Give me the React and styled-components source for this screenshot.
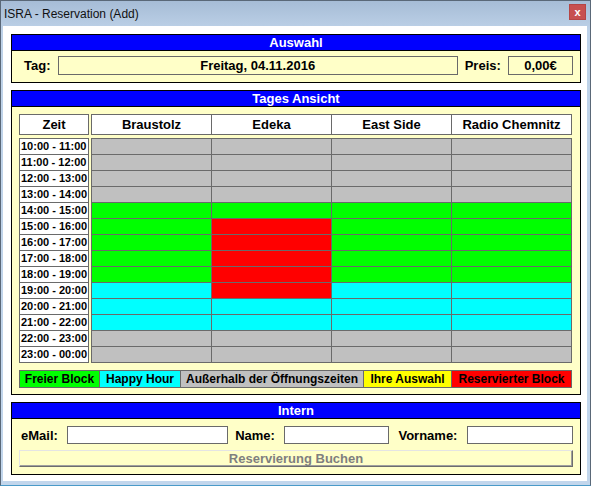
import React from 'react';
import styled, { createGlobalStyle } from 'styled-components';

const GlobalStyle = createGlobalStyle`
  html, body { margin: 0; padding: 0; background: #ffffff; }
  * { box-sizing: border-box; }
`;

const YELLOW = '#ffffc8';
const LINE = '#6a6a6a';

const COLORS = {
  g: '#c0c0c0',
  f: '#00ff00',
  h: '#00ffff',
  r: '#ff0000',
  y: '#ffff00',
};

const Window = styled.div`
  width: 591px;
  height: 486px;
  border: 1px solid #5a6878;
  border-bottom-color: #4a9ac8;
  background: linear-gradient(#a6bcd6, #bed2e8 30px, #c2d6ec);
  display: flex;
  flex-direction: column;
  padding: 0 3px 4px 1px;
  font-family: "Liberation Sans", Arial, sans-serif;
`;

const TitleBar = styled.div`
  height: 25px;
  display: flex;
  align-items: center;
  justify-content: space-between;
  padding-left: 2px;
  padding-right: 1px;
  font-size: 12px;
  color: #111;
`;

const CloseButton = styled.div`
  width: 17px;
  height: 16px;
  margin-top: -4px;
  background: #c75050;
  color: #fff;
  font-weight: bold;
  font-size: 11px;
  line-height: 14px;
  text-align: center;
  border: 1px solid #b54545;
`;

const Client = styled.div`
  flex: 1;
  margin-left: 1px;
  background: #ffffff;
  padding: 8px 6px 0 8px;
  display: flex;
  flex-direction: column;
  gap: 7px;
`;

const Panel = styled.section`
  border: 1px solid #000;
  background: ${YELLOW};
`;

const PanelHeader = styled.div`
  background: #0000ff;
  color: #fff;
  font-weight: bold;
  font-size: 13px;
  height: 16px;
  line-height: 15px;
  text-align: center;
  border-bottom: 1px solid #000;
`;

const AuswahlBody = styled.div`
  display: grid;
  grid-template-columns: auto 400px auto 65px;
  align-items: center;
  padding: 5px 7px 7px 12px;
  column-gap: 7px;
`;

const Label = styled.span`
  font-weight: bold;
  font-size: 13px;
  color: #000;
  white-space: nowrap;
`;

const Field = styled.div`
  height: 19px;
  border: 1px solid ${LINE};
  background: ${YELLOW};
  font-weight: bold;
  font-size: 13px;
  line-height: 17px;
  text-align: center;
`;

const TagesBody = styled.div`
  padding: 7px 8px 6px 7px;
`;

const Schedule = styled.div`
  display: grid;
  grid-template-columns: 70px 481px;
  column-gap: 2px;
  row-gap: 3px;
`;

const HeadBox = styled.div`
  height: 21px;
  border: 1px solid ${LINE};
  background: #fff;
  font-weight: bold;
  font-size: 13px;
  line-height: 19px;
  text-align: center;
`;

const HeadRow = styled.div`
  display: grid;
  grid-template-columns: repeat(4, 120px);
  height: 21px;
  border: 1px solid ${LINE};
  border-right: none;
  background: #fff;
`;

const HeadCell = styled.div`
  border-right: 1px solid ${LINE};
  font-weight: bold;
  font-size: 13px;
  line-height: 19px;
  text-align: center;
`;

const TimeColumn = styled.div`
  border-top: 1px solid ${LINE};
  border-left: 1px solid ${LINE};
  display: flex;
  flex-direction: column;
`;

const TimeCell = styled.div`
  height: 16px;
  border-right: 1px solid ${LINE};
  border-bottom: 1px solid ${LINE};
  background: #fff;
  font-weight: bold;
  font-size: 11px;
  line-height: 15px;
  padding-left: 1px;
  white-space: nowrap;
`;

const Grid = styled.div`
  border-top: 1px solid ${LINE};
  border-left: 1px solid ${LINE};
  display: grid;
  grid-template-columns: repeat(4, 120px);
  grid-auto-rows: 16px;
`;

const Slot = styled.div`
  background: ${p => COLORS[p.$c]};
  border-right: 1px solid ${LINE};
  border-bottom: 1px solid ${LINE};
`;

const Legend = styled.div`
  display: flex;
  margin-top: 7px;
  width: 553px;
  height: 18px;
  border: 1px solid ${LINE};
`;

const LegendItem = styled.div`
  width: ${p => p.$w}px;
  background: ${p => COLORS[p.$c]};
  border-right: ${p => (p.$last ? 'none' : `1px solid ${LINE}`)};
  font-weight: bold;
  font-size: 12px;
  line-height: 16px;
  text-align: center;
  white-space: nowrap;
  color: #000;
`;

const InternBody = styled.div`
  padding: 7px 7px 7px 7px;
  display: flex;
  flex-direction: column;
  gap: 6px;
`;

const InternRow = styled.div`
  display: flex;
  align-items: center;
  padding-left: 2px;
`;

const Input = styled.div`
  width: ${p => p.$w}px;
  height: 18px;
  border: 1px solid ${LINE};
  background: #fff;
  margin-left: ${p => p.$gap}px;
  margin-right: ${p => p.$after || 0}px;
`;

const BookButton = styled.div`
  height: 17px;
  border: 1px solid;
  border-color: #e4e4e4 #6d6d6d #6d6d6d #e4e4e4;
  box-shadow: inset -1px -1px 0 #a0a0a0;
  background: ${YELLOW};
  color: #7f7f7f;
  font-weight: bold;
  font-size: 13px;
  line-height: 15px;
  text-align: center;
`;

const times = [
  '10:00 - 11:00', '11:00 - 12:00', '12:00 - 13:00', '13:00 - 14:00',
  '14:00 - 15:00', '15:00 - 16:00', '16:00 - 17:00', '17:00 - 18:00',
  '18:00 - 19:00', '19:00 - 20:00', '20:00 - 21:00', '21:00 - 22:00',
  '22:00 - 23:00', '23:00 - 00:00',
];

// g = geschlossen, f = frei, h = happy hour, r = reserviert
const rows = [
  'gggg', 'gggg', 'gggg', 'gggg',
  'ffff', 'frff', 'frff', 'frff', 'frff',
  'hrhh', 'hhhh', 'hhhh',
  'gggg', 'gggg',
];

const columns = ['Braustolz', 'Edeka', 'East Side', 'Radio Chemnitz'];

const legend = [
  { c: 'f', w: 80, t: 'Freier Block' },
  { c: 'h', w: 81, t: 'Happy Hour' },
  { c: 'g', w: 183, t: 'Außerhalb der Öffnungszeiten' },
  { c: 'y', w: 88, t: 'Ihre Auswahl' },
  { c: 'r', w: 119, t: 'Reservierter Block' },
];

export default function App() {
  return (
    <>
      <GlobalStyle />
      <Window>
        <TitleBar>
          <span>ISRA - Reservation (Add)</span>
          <CloseButton>x</CloseButton>
        </TitleBar>
        <Client>
          <Panel>
            <PanelHeader>Auswahl</PanelHeader>
            <AuswahlBody>
              <Label>Tag:</Label>
              <Field>Freitag, 04.11.2016</Field>
              <Label>Preis:</Label>
              <Field>0,00€</Field>
            </AuswahlBody>
          </Panel>

          <Panel>
            <PanelHeader>Tages Ansicht</PanelHeader>
            <TagesBody>
              <Schedule>
                <HeadBox>Zeit</HeadBox>
                <HeadRow>
                  {columns.map(c => (
                    <HeadCell key={c}>{c}</HeadCell>
                  ))}
                </HeadRow>
                <TimeColumn>
                  {times.map(t => (
                    <TimeCell key={t}>{t}</TimeCell>
                  ))}
                </TimeColumn>
                <Grid>
                  {rows.map((r, i) =>
                    r.split('').map((c, j) => <Slot key={`${i}-${j}`} $c={c} />)
                  )}
                </Grid>
              </Schedule>
              <Legend>
                {legend.map((l, i) => (
                  <LegendItem key={l.t} $c={l.c} $w={l.w} $last={i === legend.length - 1}>
                    {l.t}
                  </LegendItem>
                ))}
              </Legend>
            </TagesBody>
          </Panel>

          <Panel>
            <PanelHeader>Intern</PanelHeader>
            <InternBody>
              <InternRow>
                <Label>eMail:</Label>
                <Input $w={162} $gap={9} $after={7} />
                <Label>Name:</Label>
                <Input $w={106} $gap={9} $after={9} />
                <Label>Vorname:</Label>
                <Input $w={106} $gap={10} />
              </InternRow>
              <BookButton>Reservierung Buchen</BookButton>
            </InternBody>
          </Panel>
        </Client>
      </Window>
    </>
  );
}
